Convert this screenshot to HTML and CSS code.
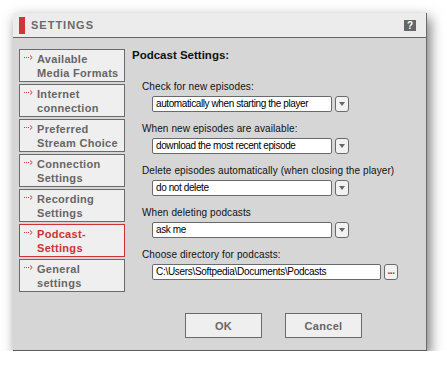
FILE: index.html
```html
<!DOCTYPE html>
<html lang="en">
<head>
  <meta charset="UTF-8" />
  <title>Settings</title>
  <link rel="stylesheet" href="styles.css">
</head>
<body>

  <div class="window">
    <div class="titlebar">
      <span class="title-mark"></span>
      <span class="title">SETTINGS</span>
      <span class="help">?</span>
    </div>

    <div class="content">
      <div class="sidebar">
        <div class="nav-item"><svg class="arrow" viewBox="0 0 9 5"><rect x="0" y="2" width="1" height="1"/><rect x="2" y="2" width="1" height="1"/><rect x="4" y="2" width="1" height="1"/><path d="M6 0.5 L8.2 2.5 L6 4.5" /></svg><span>Available<br>Media Formats</span></div>
        <div class="nav-item"><svg class="arrow" viewBox="0 0 9 5"><rect x="0" y="2" width="1" height="1"/><rect x="2" y="2" width="1" height="1"/><rect x="4" y="2" width="1" height="1"/><path d="M6 0.5 L8.2 2.5 L6 4.5" /></svg><span>Internet<br>connection</span></div>
        <div class="nav-item"><svg class="arrow" viewBox="0 0 9 5"><rect x="0" y="2" width="1" height="1"/><rect x="2" y="2" width="1" height="1"/><rect x="4" y="2" width="1" height="1"/><path d="M6 0.5 L8.2 2.5 L6 4.5" /></svg><span>Preferred<br>Stream Choice</span></div>
        <div class="nav-item"><svg class="arrow" viewBox="0 0 9 5"><rect x="0" y="2" width="1" height="1"/><rect x="2" y="2" width="1" height="1"/><rect x="4" y="2" width="1" height="1"/><path d="M6 0.5 L8.2 2.5 L6 4.5" /></svg><span>Connection<br>Settings</span></div>
        <div class="nav-item"><svg class="arrow" viewBox="0 0 9 5"><rect x="0" y="2" width="1" height="1"/><rect x="2" y="2" width="1" height="1"/><rect x="4" y="2" width="1" height="1"/><path d="M6 0.5 L8.2 2.5 L6 4.5" /></svg><span>Recording<br>Settings</span></div>
        <div class="nav-item active"><svg class="arrow" viewBox="0 0 9 5"><rect x="0" y="2" width="1" height="1"/><rect x="2" y="2" width="1" height="1"/><rect x="4" y="2" width="1" height="1"/><path d="M6 0.5 L8.2 2.5 L6 4.5" /></svg><span>Podcast-<br>Settings</span></div>
        <div class="nav-item"><svg class="arrow" viewBox="0 0 9 5"><rect x="0" y="2" width="1" height="1"/><rect x="2" y="2" width="1" height="1"/><rect x="4" y="2" width="1" height="1"/><path d="M6 0.5 L8.2 2.5 L6 4.5" /></svg><span>General<br>settings</span></div>
      </div>

      <div class="main">
        <h2>Podcast Settings:</h2>

        <div class="field">
          <label>Check for new episodes:</label>
          <div class="row">
            <div class="select">automatically when starting the player</div>
            <div class="drop"><span class="tri"></span></div>
          </div>
        </div>

        <div class="field">
          <label>When new episodes are available:</label>
          <div class="row">
            <div class="select">download the most recent episode</div>
            <div class="drop"><span class="tri"></span></div>
          </div>
        </div>

        <div class="field">
          <label>Delete episodes automatically (when closing the player)</label>
          <div class="row">
            <div class="select">do not delete</div>
            <div class="drop"><span class="tri"></span></div>
          </div>
        </div>

        <div class="field">
          <label>When deleting podcasts</label>
          <div class="row">
            <div class="select">ask me</div>
            <div class="drop"><span class="tri"></span></div>
          </div>
        </div>

        <div class="field">
          <label>Choose directory for podcasts:</label>
          <div class="row">
            <div class="select path">C:\Users\Softpedia\Documents\Podcasts</div>
            <div class="drop browse">...</div>
          </div>
        </div>
      </div>
    </div>

    <div class="footer">
      <button class="btn">OK</button>
      <button class="btn">Cancel</button>
    </div>
  </div>

</body>
</html>
```

FILE: styles.css
```css
* { margin: 0; padding: 0; box-sizing: border-box; }
body { background: #ffffff; font-family: 'Liberation Sans', Arial, sans-serif; }

.window {
  margin: 13px 0 0 13px;
  width: 414px;
  height: 338px;
  background: #d6d6d6;
  border-right: 1px solid #6a6a6a;
  border-bottom: 1px solid #5a5a5a;
  box-shadow: 3px 5px 12px rgba(0,0,0,0.55);
  display: flex;
  flex-direction: column;
}

.titlebar {
  height: 25px;
  background: #ececec;
  border-bottom: 1px solid #666;
  display: flex;
  align-items: center;
  padding-left: 6px;
}
.title-mark { width: 6px; height: 17px; background: #d03535; }
.title { margin-left: 6px; font-weight: bold; font-size: 11px; letter-spacing: 1px; color: #6a6a6a; }
.help {
  margin-left: auto;
  margin-right: 10px;
  width: 12px;
  height: 11px;
  background: #666;
  color: #fff;
  font-weight: bold;
  font-size: 10px;
  line-height: 11px;
  text-align: center;
}

.content { display: flex; padding: 11px 0 0 6px; }
.sidebar { width: 106px; display: flex; flex-direction: column; gap: 2px; }
.nav-item {
  height: 33px;
  background: #efefef;
  border: 1px solid #6a6a6a;
  padding: 2px 0 0 4px;
  display: flex;
  align-items: flex-start;
  font-weight: bold;
  font-size: 11px;
  line-height: 14px;
  letter-spacing: 0.3px;
  color: #666;
}
.nav-item span { margin-left: 4px; }
.nav-item.active { border-color: #cc3333; color: #cc3333; }
.arrow { width: 9px; height: 5px; margin-top: 3px; flex-shrink: 0; fill: #d03535; }
.arrow path { fill: none; stroke: #d03535; stroke-width: 1; }

.main { margin: -1px 0 0 7px; flex: 1; }
.main h2 { font-size: 11.5px; line-height: 14px; color: #111; margin-bottom: 18px; }

.field { margin-left: 10px; margin-bottom: 10px; }
.field label { display: block; font-size: 10px; letter-spacing: 0.1px; line-height: 14px; color: #111; margin-bottom: 2px; }
.row { display: flex; gap: 3px; margin-left: 10px; }
.select {
  width: 180px;
  height: 16px;
  background: #fff;
  border: 1px solid #6a6a6a;
  border-radius: 2px;
  font-size: 10px;
  letter-spacing: -0.4px;
  line-height: 14px;
  padding-left: 3px;
  color: #000;
  white-space: nowrap;
  overflow: hidden;
}
.select.path { width: 229px; letter-spacing: -0.3px; }
.drop {
  width: 14px;
  height: 16px;
  background: #f2f2f2;
  border: 1px solid #6a6a6a;
  border-radius: 3px;
  display: flex;
  align-items: center;
  justify-content: center;
}
.tri { width: 0; height: 0; border-left: 3.5px solid transparent; border-right: 3.5px solid transparent; border-top: 4px solid #666; }
.browse { font-size: 10px; font-weight: bold; color: #555; line-height: 16px; align-items: flex-end; letter-spacing: -0.5px; }

.footer { margin-top: auto; display: flex; gap: 23px; padding: 0 0 12px 172px; }
.btn {
  width: 77px;
  height: 25px;
  background: #efefef;
  border: 1px solid #6a6a6a;
  font-family: 'Liberation Sans', Arial, sans-serif;
  font-weight: bold;
  font-size: 11px;
  letter-spacing: 0.3px;
  color: #666;
}
```
